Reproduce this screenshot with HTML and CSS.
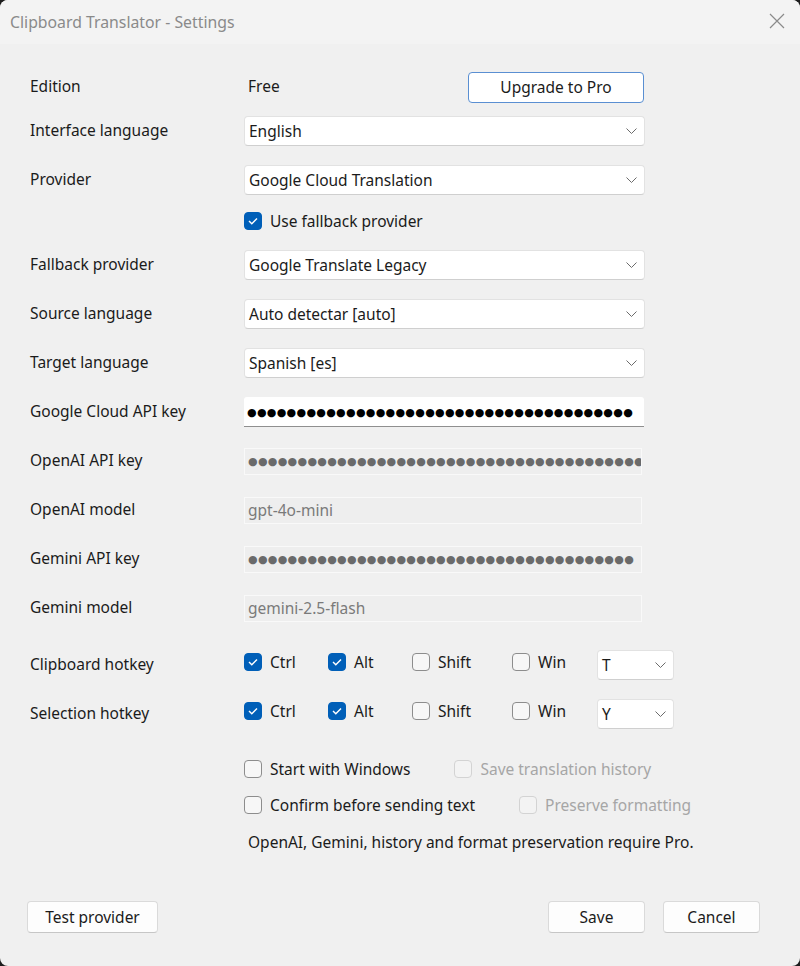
FILE: index.html
```html
<!DOCTYPE html>
<html lang="en">
<head>
    <meta charset="UTF-8">
    <meta name="viewport" content="width=device-width, initial-scale=1.0">
    <title>Clipboard Translator - Settings</title>
    <link rel="stylesheet" href="styles.css">
</head>

<body>
    <div class="window">
        <!-- Title bar -->
        <header class="titlebar">
            <span class="titlebar__text">Clipboard Translator - Settings</span>
            <svg class="titlebar__close" width="16" height="16" viewBox="0 0 16 16">
                <path d="M1 1 L15 15 M15 1 L1 15" stroke="#8a8a8a" stroke-width="1.2" fill="none"/>
            </svg>
        </header>

        <main class="form">
            <div class="row row--edition">
                <span class="label">Edition</span>
                <div class="field field--split">
                    <span class="value">Free</span>
                    <button class="btn btn--accent">Upgrade to Pro</button>
                </div>
            </div>

            <div class="row">
                <span class="label">Interface language</span>
                <div class="combo">
                    <span>English</span>
                    <svg class="chevron" width="11" height="6" viewBox="0 0 11 6"><path d="M0.5 0.5 L5.5 5.5 L10.5 0.5" fill="none" stroke="#6b6b6b" stroke-width="1"/></svg>
                </div>
            </div>

            <div class="row">
                <span class="label">Provider</span>
                <div class="combo">
                    <span>Google Cloud Translation</span>
                    <svg class="chevron" width="11" height="6" viewBox="0 0 11 6"><path d="M0.5 0.5 L5.5 5.5 L10.5 0.5" fill="none" stroke="#6b6b6b" stroke-width="1"/></svg>
                </div>
            </div>

            <div class="row row--check">
                <span class="label"></span>
                <label class="check">
                    <span class="box box--on"><svg width="12" height="10" viewBox="0 0 12 10"><path d="M2 5 L4.8 7.8 L10 2.4" fill="none" stroke="#fff" stroke-width="1.4"/></svg></span>
                    Use fallback provider
                </label>
            </div>

            <div class="row">
                <span class="label">Fallback provider</span>
                <div class="combo">
                    <span>Google Translate Legacy</span>
                    <svg class="chevron" width="11" height="6" viewBox="0 0 11 6"><path d="M0.5 0.5 L5.5 5.5 L10.5 0.5" fill="none" stroke="#6b6b6b" stroke-width="1"/></svg>
                </div>
            </div>

            <div class="row">
                <span class="label">Source language</span>
                <div class="combo">
                    <span>Auto detectar [auto]</span>
                    <svg class="chevron" width="11" height="6" viewBox="0 0 11 6"><path d="M0.5 0.5 L5.5 5.5 L10.5 0.5" fill="none" stroke="#6b6b6b" stroke-width="1"/></svg>
                </div>
            </div>

            <div class="row">
                <span class="label">Target language</span>
                <div class="combo">
                    <span>Spanish [es]</span>
                    <svg class="chevron" width="11" height="6" viewBox="0 0 11 6"><path d="M0.5 0.5 L5.5 5.5 L10.5 0.5" fill="none" stroke="#6b6b6b" stroke-width="1"/></svg>
                </div>
            </div>

            <!-- API keys, masked (groups of ten dots) -->
            <div class="row">
                <span class="label">Google Cloud API key</span>
                <div class="text text--active"><span class="secret">●●●●●●●●●●</span><span class="secret">●●●●●●●●●●</span><span class="secret">●●●●●●●●●●</span><span class="secret">●●●●●●●●●</span></div>
            </div>

            <div class="row">
                <span class="label">OpenAI API key</span>
                <div class="text text--off"><span class="secret">●●●●●●●●●●</span><span class="secret">●●●●●●●●●●</span><span class="secret">●●●●●●●●●●</span><span class="secret">●●●●●●●●●●</span></div>
            </div>

            <div class="row">
                <span class="label">OpenAI model</span>
                <div class="text text--off">gpt-4o-mini</div>
            </div>

            <div class="row">
                <span class="label">Gemini API key</span>
                <div class="text text--off"><span class="secret">●●●●●●●●●●</span><span class="secret">●●●●●●●●●●</span><span class="secret">●●●●●●●●●●</span><span class="secret">●●●●●●●●●</span></div>
            </div>

            <div class="row row--last-text">
                <span class="label">Gemini model</span>
                <div class="text text--off">gemini-2.5-flash</div>
            </div>

            <!-- Hotkeys -->
            <div class="row">
                <span class="label">Clipboard hotkey</span>
                <div class="hotkey">
                    <label class="check check--ctrl"><span class="box box--on"><svg width="12" height="10" viewBox="0 0 12 10"><path d="M2 5 L4.8 7.8 L10 2.4" fill="none" stroke="#fff" stroke-width="1.4"/></svg></span>Ctrl</label>
                    <label class="check check--alt"><span class="box box--on"><svg width="12" height="10" viewBox="0 0 12 10"><path d="M2 5 L4.8 7.8 L10 2.4" fill="none" stroke="#fff" stroke-width="1.4"/></svg></span>Alt</label>
                    <label class="check check--shift"><span class="box"></span>Shift</label>
                    <label class="check check--win"><span class="box"></span>Win</label>
                    <div class="combo combo--key">
                        <span>T</span>
                        <svg class="chevron" width="11" height="6" viewBox="0 0 11 6"><path d="M0.5 0.5 L5.5 5.5 L10.5 0.5" fill="none" stroke="#6b6b6b" stroke-width="1"/></svg>
                    </div>
                </div>
            </div>

            <div class="row row--selection">
                <span class="label">Selection hotkey</span>
                <div class="hotkey">
                    <label class="check check--ctrl"><span class="box box--on"><svg width="12" height="10" viewBox="0 0 12 10"><path d="M2 5 L4.8 7.8 L10 2.4" fill="none" stroke="#fff" stroke-width="1.4"/></svg></span>Ctrl</label>
                    <label class="check check--alt"><span class="box box--on"><svg width="12" height="10" viewBox="0 0 12 10"><path d="M2 5 L4.8 7.8 L10 2.4" fill="none" stroke="#fff" stroke-width="1.4"/></svg></span>Alt</label>
                    <label class="check check--shift"><span class="box"></span>Shift</label>
                    <label class="check check--win"><span class="box"></span>Win</label>
                    <div class="combo combo--key">
                        <span>Y</span>
                        <svg class="chevron" width="11" height="6" viewBox="0 0 11 6"><path d="M0.5 0.5 L5.5 5.5 L10.5 0.5" fill="none" stroke="#6b6b6b" stroke-width="1"/></svg>
                    </div>
                </div>
            </div>

            <!-- Options -->
            <div class="options">
                <div class="options__row">
                    <label class="check check--wide"><span class="box"></span>Start with Windows</label>
                    <label class="check check--disabled"><span class="box"></span>Save translation history</label>
                </div>
                <div class="options__row">
                    <label class="check check--wide"><span class="box"></span>Confirm before sending text</label>
                    <label class="check check--disabled"><span class="box"></span>Preserve formatting</label>
                </div>
                <p class="note">OpenAI, Gemini, history and format preservation require Pro.</p>
            </div>
        </main>

        <footer class="footer">
            <button class="btn btn--test">Test provider</button>
            <div class="footer__right">
                <button class="btn btn--footer">Save</button>
                <button class="btn btn--footer">Cancel</button>
            </div>
        </footer>
    </div>
</body>
</html>
```

FILE: styles.css
```css
:root {
    --page: #f0f0f0;
    --text: #1b1b1b;
    --muted: #7a7a7a;
    --accent: #005fb8;
    --line: #e2e2e2;
}

* {
    box-sizing: border-box;
    margin: 0;
    padding: 0;
}

body {
    background: #1d1d1d;
    font-family: "Noto Sans", "Open Sans", sans-serif;
    font-size: 15.5px;
    color: var(--text);
}

.window {
    width: 800px;
    height: 966px;
    background: var(--page);
    border-radius: 8px;
    display: flex;
    flex-direction: column;
    overflow: hidden;
}

/* Title bar */
.titlebar {
    height: 44px;
    background: #f3f3f3;
    display: flex;
    align-items: center;
    justify-content: space-between;
    padding: 0 15px 0 10px;
}

.titlebar__text {
    color: #8a8a8a;
    font-size: 15.8px;
    margin-top: -1px;
}

.titlebar__close {
    margin-top: -2px;
}

/* Form rows */
.form {
    padding: 28px 0 0 30px;
    display: flex;
    flex-direction: column;
}

.row {
    display: flex;
    align-items: center;
    height: 30px;
    margin-bottom: 19px;
}

.row--edition {
    margin-bottom: 14px;
}

.row--check {
    height: 22px;
    margin-top: -4px;
    margin-bottom: 18px;
}

.row--last-text {
    margin-bottom: 27px;
}

.row--selection {
    margin-bottom: 29px;
}

.label {
    width: 214px;
    flex-shrink: 0;
    margin-top: -2px;
}

.field--split {
    width: 400px;
    display: flex;
    align-items: center;
    justify-content: space-between;
    padding-left: 4px;
}

.value {
    margin-top: -2px;
}

/* Dropdowns */
.combo {
    width: 401px;
    height: 30px;
    background: #fff;
    border: 1px solid var(--line);
    border-bottom-color: #cfcfcf;
    border-radius: 4px;
    display: flex;
    align-items: center;
    justify-content: space-between;
    padding: 0 7px 0 4px;
}

.combo > span {
    margin-top: -1px;
}

.chevron {
    flex-shrink: 0;
}

.combo--key {
    width: 77px;
    margin-left: 1px;
}

/* Text inputs */
.text {
    width: 400px;
    height: 30px;
    display: flex;
    align-items: center;
    padding: 0 3px;
    overflow: hidden;
    white-space: nowrap;
}

.text--active {
    background: #fff;
    border-bottom: 1px solid #8f8f8f;
    border-radius: 3px 3px 0 0;
    padding-top: 1px;
}

.text--off {
    width: 398px;
    height: 27px;
    background: #eeeeee;
    border: 1px solid #f9f9f9;
    color: var(--muted);
}

.secret {
    font-family: "DejaVu Sans", sans-serif;
    font-size: 11px;
    letter-spacing: 0.3px;
    color: #000;
    flex-shrink: 0;
}

.text--off .secret {
    color: #6a6a6a;
}

/* Checkboxes */
.check {
    display: flex;
    align-items: center;
    gap: 8px;
    white-space: nowrap;
}

.box {
    width: 18px;
    height: 18px;
    border: 1px solid #8d8d8d;
    border-radius: 4px;
    background: #f7f7f7;
    display: flex;
    align-items: center;
    justify-content: center;
    flex-shrink: 0;
}

.box--on {
    background: var(--accent);
    border-color: var(--accent);
}

.hotkey {
    display: flex;
    align-items: center;
}

.hotkey .check {
    margin-top: -6px;
}

.check--ctrl,
.check--alt {
    width: 84px;
}

.check--shift {
    width: 100px;
}

.check--win {
    width: 84px;
}

.check--disabled {
    color: #a6a6a6;
}

.check--disabled .box {
    border-color: #d3d3d3;
    background: #f3f3f3;
}

/* Options under the hotkeys */
.options {
    padding-left: 214px;
    display: flex;
    flex-direction: column;
}

.options__row {
    display: flex;
    align-items: center;
    height: 22px;
    margin-bottom: 14px;
}

.check--wide {
    margin-right: 44px;
}

.note {
    margin-top: 1px;
    padding-left: 4px;
    line-height: 22px;
}

/* Buttons */
.btn {
    font-family: inherit;
    font-size: 15.5px;
    color: var(--text);
    background: #fdfdfd;
    border: 1px solid #dadada;
    border-bottom-color: #c6c6c6;
    border-radius: 4px;
    height: 32px;
    cursor: pointer;
}

.btn--accent {
    width: 176px;
    height: 31px;
    border: 1px solid #5a8fd2;
    background: #fff;
}

.footer {
    margin-top: auto;
    display: flex;
    justify-content: space-between;
    align-items: center;
    padding: 0 40px 33px 27px;
}

.btn--test {
    width: 131px;
}

.footer__right {
    display: flex;
    gap: 18px;
}

.btn--footer {
    width: 97px;
}
```
